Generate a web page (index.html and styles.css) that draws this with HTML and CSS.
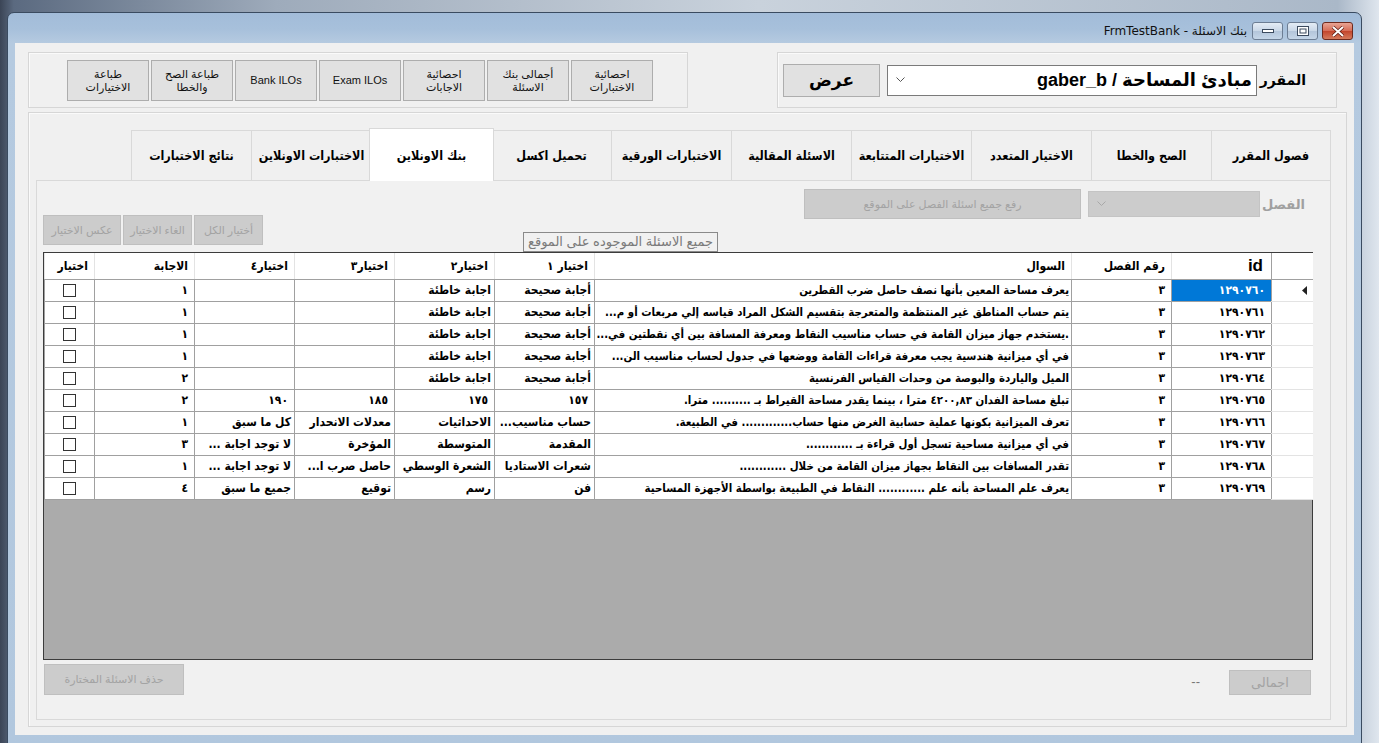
FILE: index.html
```html
<!DOCTYPE html>
<html lang="ar">
<head>
    <meta charset="UTF-8">
    <title>بنك الاسئلة - FrmTestBank</title>
    <link rel="stylesheet" href="styles.css">
</head>
<body>

<div class="window">
    <div class="titlebar">
        <span class="title">بنك الاسئلة - FrmTestBank</span>
        <div class="win-buttons">
            <span class="win-btn"><svg width="12" height="6" viewBox="0 0 12 6"><rect x="0.5" y="1.5" width="11" height="3" fill="#fff" stroke="#3b4a5e"/></svg></span>
            <span class="win-btn"><svg width="12" height="10" viewBox="0 0 12 10"><rect x="0.5" y="0.5" width="11" height="9" fill="#fff" stroke="#3b4a5e"/><rect x="3" y="3" width="6" height="4" fill="none" stroke="#3b4a5e"/></svg></span>
            <span class="win-btn close"><svg width="14" height="11" viewBox="0 0 14 11"><path d="M2 1 L12 10 M12 1 L2 10" stroke="#5a1b12" stroke-width="3.4"/><path d="M2 1 L12 10 M12 1 L2 10" stroke="#fff" stroke-width="2"/></svg></span>
        </div>
    </div>

    <div class="client">
        <div class="top-row">
            <div class="group tools">
                <button class="tool-btn">احصائية<br>الاختبارات</button>
                <button class="tool-btn">أجمالى بنك<br>الاسئلة</button>
                <button class="tool-btn">احصائية<br>الاجابات</button>
                <button class="tool-btn">Exam ILOs</button>
                <button class="tool-btn">Bank ILOs</button>
                <button class="tool-btn">طباعة الصح<br>والخطا</button>
                <button class="tool-btn">طباعة<br>الاختيارات</button>
            </div>

            <div class="group course">
                <span class="course-label">المقرر</span>
                <div class="course-combo">
                    <span class="course-text">مبادئ المساحة / gaber_b</span>
                    <svg class="arrow" width="9" height="6" viewBox="0 0 9 6"><path d="M0.5 0.5 L4.5 4.5 L8.5 0.5" fill="none" stroke="#555"/></svg>
                </div>
                <button class="show-btn">عرض</button>
            </div>
        </div>

        <div class="group main">
            <div class="tabs">
                <div class="tab">فصول المقرر</div>
                <div class="tab">الصح والخطا</div>
                <div class="tab">الاختيار المتعدد</div>
                <div class="tab">الاختيارات المتتابعة</div>
                <div class="tab">الاسئلة المقالية</div>
                <div class="tab">الاختبارات الورقية</div>
                <div class="tab">تحميل اكسل</div>
                <div class="tab active">بنك الاونلاين</div>
                <div class="tab">الاختبارات الاونلاين</div>
                <div class="tab">نتائج الاختبارات</div>
            </div>

            <div class="tab-page">
                <div class="tools-bar">
                    <div class="left-tools">
                        <div class="select-btns">
                            <button class="dis-btn w78">عكس الاختيار</button>
                            <button class="dis-btn w69">الغاء الاختيار</button>
                            <button class="dis-btn w69">أختيار الكل</button>
                        </div>
                        <span class="online-label">جميع الاسئلة الموجوده على الموقع</span>
                    </div>
                    <div class="right-tools">
                        <span class="chapter-label">الفصل</span>
                        <div class="dis-combo">
                            <svg width="9" height="6" viewBox="0 0 9 6"><path d="M0.5 0.5 L4.5 4.5 L8.5 0.5" fill="none" stroke="#a8a8a8"/></svg>
                        </div>
                        <button class="dis-btn upload">رفع جميع اسئلة الفصل على الموقع</button>
                    </div>
                </div>

                <div class="grid">
                    <table>
                        <colgroup>
                            <col style="width:41px"><col style="width:100px"><col style="width:100px"><col style="width:477px">
                            <col style="width:100px"><col style="width:100px"><col style="width:100px"><col style="width:100px">
                            <col style="width:100px"><col style="width:50px">
                        </colgroup>
                        <thead>
                            <tr>
                                <th class="rh"></th>
                                <th class="id-head">id</th>
                                <th>رقم الفصل</th>
                                <th>السوال</th>
                                <th>اختيار ١</th>
                                <th>اختيار٢</th>
                                <th>اختيار٣</th>
                                <th>اختيار٤</th>
                                <th>الاجابة</th>
                                <th>اختيار</th>
                            </tr>
                        </thead>
                        <tbody>
                            <tr>
                                <td class="rh"><svg width="5" height="9" viewBox="0 0 5 9"><path d="M5 0 L0 4.5 L5 9 Z" fill="#222"/></svg></td>
                                <td class="num sel">١٢٩٠٧٦٠</td><td class="num">٣</td>
                                <td class="q">يعرف مساحة المعين بأنها نصف حاصل ضرب القطرين</td>
                                <td>أجابة صحيحة</td><td>اجابة خاطئة</td><td></td><td></td>
                                <td class="num">١</td><td class="chk"><span class="box"></span></td>
                            </tr>
                            <tr>
                                <td class="rh"></td>
                                <td class="num">١٢٩٠٧٦١</td><td class="num">٣</td>
                                <td class="q">يتم حساب المناطق غير المنتظمة والمتعرجة بتقسيم الشكل المراد قياسه إلي مربعات أو م...</td>
                                <td>أجابة صحيحة</td><td>اجابة خاطئة</td><td></td><td></td>
                                <td class="num">١</td><td class="chk"><span class="box"></span></td>
                            </tr>
                            <tr>
                                <td class="rh"></td>
                                <td class="num">١٢٩٠٧٦٢</td><td class="num">٣</td>
                                <td class="q">.يستخدم جهاز ميزان القامة في حساب مناسيب النقاط ومعرفة المسافة بين أي نقطتين في...</td>
                                <td>أجابة صحيحة</td><td>اجابة خاطئة</td><td></td><td></td>
                                <td class="num">١</td><td class="chk"><span class="box"></span></td>
                            </tr>
                            <tr>
                                <td class="rh"></td>
                                <td class="num">١٢٩٠٧٦٣</td><td class="num">٣</td>
                                <td class="q">في أي ميزانية هندسية يجب معرفة قراءات القامة ووضعها في جدول لحساب مناسيب الن...</td>
                                <td>أجابة صحيحة</td><td>اجابة خاطئة</td><td></td><td></td>
                                <td class="num">١</td><td class="chk"><span class="box"></span></td>
                            </tr>
                            <tr>
                                <td class="rh"></td>
                                <td class="num">١٢٩٠٧٦٤</td><td class="num">٣</td>
                                <td class="q">الميل والياردة والبوصة من وحدات القياس الفرنسية</td>
                                <td>أجابة صحيحة</td><td>اجابة خاطئة</td><td></td><td></td>
                                <td class="num">٢</td><td class="chk"><span class="box"></span></td>
                            </tr>
                            <tr>
                                <td class="rh"></td>
                                <td class="num">١٢٩٠٧٦٥</td><td class="num">٣</td>
                                <td class="q">تبلغ مساحة الفدان ٤٢٠٠,٨٣ مترا ، بينما يقدر مساحة القيراط بـ .......... مترا.</td>
                                <td class="num">١٥٧</td><td class="num">١٧٥</td><td class="num">١٨٥</td><td class="num">١٩٠</td>
                                <td class="num">٢</td><td class="chk"><span class="box"></span></td>
                            </tr>
                            <tr>
                                <td class="rh"></td>
                                <td class="num">١٢٩٠٧٦٦</td><td class="num">٣</td>
                                <td class="q">تعرف الميزانية بكونها عملية حسابية الغرض منها حساب............. في الطبيعة.</td>
                                <td>حساب مناسيب...</td><td>الاحداثيات</td><td>معدلات الانحدار</td><td>كل ما سبق</td>
                                <td class="num">١</td><td class="chk"><span class="box"></span></td>
                            </tr>
                            <tr>
                                <td class="rh"></td>
                                <td class="num">١٢٩٠٧٦٧</td><td class="num">٣</td>
                                <td class="q">في أي ميزانية مساحية تسجل أول قراءة بـ ............</td>
                                <td>المقدمة</td><td>المتوسطة</td><td>المؤخرة</td><td>لا توجد اجابة ...</td>
                                <td class="num">٣</td><td class="chk"><span class="box"></span></td>
                            </tr>
                            <tr>
                                <td class="rh"></td>
                                <td class="num">١٢٩٠٧٦٨</td><td class="num">٣</td>
                                <td class="q">تقدر المسافات بين النقاط بجهاز ميزان القامة من خلال ............</td>
                                <td>شعرات الاستاديا</td><td>الشعرة الوسطي</td><td>حاصل صرب ا...</td><td>لا توجد اجابة ...</td>
                                <td class="num">١</td><td class="chk"><span class="box"></span></td>
                            </tr>
                            <tr>
                                <td class="rh"></td>
                                <td class="num">١٢٩٠٧٦٩</td><td class="num">٣</td>
                                <td class="q">يعرف علم المساحة بأنه علم ............ النقاط في الطبيعة بواسطة الأجهزة المساحية</td>
                                <td>فن</td><td>رسم</td><td>توقيع</td><td>جميع ما سبق</td>
                                <td class="num">٤</td><td class="chk"><span class="box"></span></td>
                            </tr>
                        </tbody>
                    </table>
                </div>

                <div class="bottom-row">
                    <button class="dis-btn delete">حذف الاسئلة المختارة</button>
                    <span class="dash">--</span>
                    <button class="dis-btn total">اجمالى</button>
                </div>
            </div>
        </div>
    </div>
</div>

</body>
</html>
```

FILE: styles.css
```css
* {
    box-sizing: border-box;
}
html, body {
    margin: 0;
    padding: 0;
    height: 100%;
    overflow: hidden;
}
body {
    font-family: "Liberation Sans", "DejaVu Sans", sans-serif;
    font-size: 12px;
    color: #000;
    background: linear-gradient(90deg, #3b4556 0%, #5b6a80 1%, #9eabbb 20%, #c9d2dc 55%, #aab8c8 97%, #dfe6ee 100%);
}
button {
    font-family: inherit;
    cursor: default;
}

/* Window frame */
.window {
    margin: 12px 0 0 7px;
    width: 1355px;
    height: 740px;
    padding: 0 7px;
    border: 1px solid #3a4b60;
    border-radius: 7px 7px 0 0;
    background: linear-gradient(180deg, #a2bcd9 0px, #a7c0db 16px, #b5cae0 30px, #b1c7de 100%);
}
.titlebar {
    height: 30px;
    display: flex;
    justify-content: flex-end;
    align-items: flex-start;
}
.title {
    direction: rtl;
    margin-top: 11px;
    margin-right: 5px;
    font-size: 12px;
    font-family: "DejaVu Sans", sans-serif;
    color: #111;
}
.win-buttons {
    display: flex;
    gap: 4px;
    margin-top: 9px;
    margin-right: 1px;
}
.win-btn {
    width: 31px;
    height: 18px;
    border: 1px solid #6c7d93;
    border-radius: 3px;
    background: linear-gradient(180deg, #e4ecf5 0%, #c9d7e7 50%, #b3c5da 51%, #c5d6e8 100%);
    display: flex;
    align-items: center;
    justify-content: center;
}
.win-btn.close {
    border-color: #6d2a1e;
    background: linear-gradient(180deg, #e8a494 0%, #d56b55 50%, #c2452c 51%, #d47a5c 100%);
}

.client {
    height: 692px;
    background: #f0f0f0;
}

/* Top groups */
.top-row {
    display: flex;
    padding: 9px 0 0 13px;
}
.group {
    border: 1px solid #d6d6d6;
    box-shadow: inset 1px 1px 0 #fafafa;
}
.tools {
    width: 660px;
    height: 56px;
    direction: rtl;
    display: flex;
    gap: 2px;
    padding: 7px 34px 0 0;
}
.tool-btn {
    width: 82px;
    height: 41px;
    background: #e1e1e1;
    border: 1px solid #adadad;
    font-size: 11px;
    line-height: 13px;
    padding: 0;
    color: #111;
}
.course {
    width: 560px;
    height: 56px;
    margin-left: 89px;
    direction: rtl;
    display: flex;
    align-items: center;
    padding: 0 30px 0 0;
}
.course-label {
    font-size: 14px;
    font-weight: bold;
    width: 32px;
    text-align: center;
}
.course-combo {
    width: 370px;
    height: 31px;
    margin-right: 17px;
    background: #fff;
    border: 1px solid #7a7a7a;
    display: flex;
    align-items: center;
    padding: 0 4px 0 8px;
}
.course-text {
    font-size: 18px;
    font-weight: bold;
    flex: 1;
}
.course-combo .arrow {
    flex: none;
}
.show-btn {
    width: 97px;
    height: 33px;
    margin-right: 7px;
    background: #e1e1e1;
    border: 1px solid #adadad;
    font-size: 17px;
    font-weight: bold;
    padding: 0;
}

/* Main group with tabs */
.main {
    margin: 4px 0 0 13px;
    width: 1319px;
    height: 615px;
    padding: 15px 15px 0 7px;
}
.tabs {
    direction: rtl;
    display: flex;
    align-items: flex-end;
    height: 52px;
    position: relative;
    z-index: 1;
}
.tab {
    flex: none;
    width: 121px;
    height: 50px;
    border: 1px solid #d9d9d9;
    border-bottom: none;
    margin-left: -1px;
    background: #f0f0f0;
    font-family: "DejaVu Sans Condensed", "DejaVu Sans", sans-serif;
    font-size: 12.5px;
    font-weight: bold;
    white-space: nowrap;
    display: flex;
    align-items: center;
    justify-content: center;
}
.tab:first-child {
    width: 120px;
}
.tab.active {
    width: 125px;
    height: 53px;
    margin: 0 -2px -1px -3px;
    background: #fff;
    position: relative;
    z-index: 2;
}
.tab-page {
    width: 1295px;
    height: 540px;
    border: 1px solid #d9d9d9;
    background: #f1f1f1;
}

/* Tools bar above grid */
.tools-bar {
    height: 71px;
    display: flex;
}
.left-tools {
    display: flex;
    align-items: flex-end;
    padding-left: 6px;
}
.select-btns {
    display: flex;
    gap: 2px;
    margin-bottom: 7px;
}
.dis-btn {
    height: 30px;
    background: #cccccc;
    border: 1px solid #bfbfbf;
    color: #a3a3a3;
    font-size: 11px;
    padding: 0;
}
.w78 { width: 78px; }
.w69 { width: 69px; }
.online-label {
    margin-left: 260px;
    width: 195px;
    height: 20px;
    border: 1px solid #8a8a8a;
    color: #7a7a7a;
    font-size: 13px;
    text-align: center;
    line-height: 18px;
    direction: rtl;
}
.right-tools {
    margin-left: auto;
    direction: rtl;
    display: flex;
    align-items: center;
    height: 30px;
    margin-top: 8px;
    padding-right: 25px;
}
.chapter-label {
    color: #a0a0a0;
    font-size: 13px;
    font-weight: bold;
    width: 33px;
}
.dis-combo {
    width: 172px;
    height: 26px;
    margin-right: 12px;
    background: #cccccc;
    border: 1px solid #c4c4c4;
    display: flex;
    align-items: center;
    justify-content: flex-end;
    padding-left: 8px;
}
.upload {
    width: 277px;
    margin-right: 7px;
}

/* Data grid */
.grid {
    margin-left: 6px;
    width: 1270px;
    height: 408px;
    border: 1px solid #3c3c3c;
    background: #ababab;
}
.grid table {
    direction: rtl;
    width: 1268px;
    table-layout: fixed;
    border-collapse: collapse;
    font-family: "DejaVu Sans Condensed", "DejaVu Sans", sans-serif;
}
.grid th {
    height: 26px;
    background: #fff;
    font-size: 12px;
    font-weight: bold;
    text-align: right;
    padding: 0 6px;
    border-left: 1px solid #e3e3e3;
    border-bottom: 1px solid #a0a0a0;
    white-space: nowrap;
    overflow: hidden;
}
.grid th.id-head {
    font-family: "Liberation Sans", sans-serif;
    font-size: 17px;
    padding-right: 8px;
}
.grid td {
    height: 22px;
    background: #fff;
    border: 1px solid #a0a0a0;
    font-size: 12px;
    font-weight: bold;
    text-align: right;
    padding: 0 3px;
    white-space: nowrap;
    overflow: hidden;
}
.grid td.q {
    font-size: 11.4px;
    padding: 0 2px;
}
.grid .rh {
    border-left: 1px solid #a0a0a0;
    border-right: none;
    padding: 0;
}
.grid td.rh {
    text-align: right;
    padding-right: 6px;
    line-height: 0;
    border-top: 1px solid #e3e3e3;
    border-bottom: 1px solid #e3e3e3;
}
.grid td.rh svg {
    display: inline-block;
    vertical-align: middle;
}
.grid td.num {
    padding-right: 6px;
    letter-spacing: 2px;
}
.grid td.sel {
    background: #0078d7;
    color: #fff;
}
.grid td.chk {
    text-align: center;
    padding: 0;
}
.box {
    display: inline-block;
    width: 13px;
    height: 13px;
    border: 1px solid #333;
    background: #fff;
    vertical-align: middle;
}

/* Bottom row */
.bottom-row {
    display: flex;
    align-items: flex-end;
    height: 35px;
    padding: 0 19px 0 7px;
}
.delete {
    width: 140px;
    height: 31px;
}
.dash {
    margin-left: auto;
    margin-right: 29px;
    margin-bottom: 6px;
    font-size: 13px;
    color: #777;
}
.total {
    width: 82px;
    height: 25px;
    font-size: 13px;
}
```
